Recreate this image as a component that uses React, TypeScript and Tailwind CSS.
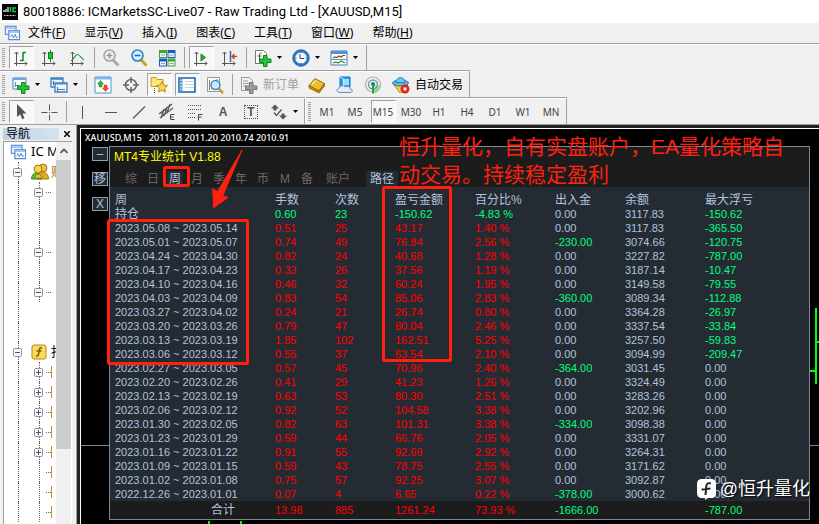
import type { ReactNode } from "react";
import clsx from "clsx";

const menus = [
    ["文件", "F"],
    ["显示", "V"],
    ["插入", "I"],
    ["图表", "C"],
    ["工具", "T"],
    ["窗口", "W"],
    ["帮助", "H"],
];

const periods = ["M1", "M5", "M15", "M30", "H1", "H4", "D1", "W1", "MN"];

const tabs = ["综", "日", "周", "月", "季", "年", "币", "M", "备"];

const columns = ["周", "手数", "次数", "盈亏金额", "百分比%", "出入金", "余额", "最大浮亏"];

const rows = [
    ["持仓", "0.60", "23", "-150.62", "-4.83 %", "0.00", "3117.83", "-150.62"],
    ["2023.05.08 ~ 2023.05.14", "0.51", "25", "43.17", "1.40 %", "0.00", "3117.83", "-365.50"],
    ["2023.05.01 ~ 2023.05.07", "0.74", "49", "76.84", "2.56 %", "-230.00", "3074.66", "-120.75"],
    ["2023.04.24 ~ 2023.04.30", "0.82", "24", "40.68", "1.28 %", "0.00", "3227.82", "-787.00"],
    ["2023.04.17 ~ 2023.04.23", "0.33", "26", "37.56", "1.19 %", "0.00", "3187.14", "-10.47"],
    ["2023.04.10 ~ 2023.04.16", "0.46", "32", "60.24", "1.95 %", "0.00", "3149.58", "-79.55"],
    ["2023.04.03 ~ 2023.04.09", "0.83", "54", "85.06", "2.83 %", "-360.00", "3089.34", "-112.88"],
    ["2023.03.27 ~ 2023.04.02", "0.24", "21", "26.74", "0.80 %", "0.00", "3364.28", "-26.97"],
    ["2023.03.20 ~ 2023.03.26", "0.79", "47", "80.04", "2.46 %", "0.00", "3337.54", "-33.84"],
    ["2023.03.13 ~ 2023.03.19", "1.85", "102", "162.51", "5.25 %", "0.00", "3257.50", "-59.83"],
    ["2023.03.06 ~ 2023.03.12", "0.55", "37", "63.54", "2.10 %", "0.00", "3094.99", "-209.47"],
    ["2023.02.27 ~ 2023.03.05", "0.57", "45", "70.96", "2.40 %", "-364.00", "3031.45", "0.00"],
    ["2023.02.20 ~ 2023.02.26", "0.41", "29", "41.23", "1.26 %", "0.00", "3324.49", "0.00"],
    ["2023.02.13 ~ 2023.02.19", "0.63", "53", "80.30", "2.51 %", "0.00", "3283.26", "0.00"],
    ["2023.02.06 ~ 2023.02.12", "0.92", "52", "104.58", "3.38 %", "0.00", "3202.96", "0.00"],
    ["2023.01.30 ~ 2023.02.05", "0.82", "63", "101.31", "3.38 %", "-334.00", "3098.38", "0.00"],
    ["2023.01.23 ~ 2023.01.29", "0.59", "44", "66.76", "2.05 %", "0.00", "3331.07", "0.00"],
    ["2023.01.16 ~ 2023.01.22", "0.91", "55", "92.69", "2.92 %", "0.00", "3264.31", "0.00"],
    ["2023.01.09 ~ 2023.01.15", "0.59", "43", "78.75", "2.55 %", "0.00", "3171.62", "0.00"],
    ["2023.01.02 ~ 2023.01.08", "0.75", "57", "92.25", "3.07 %", "0.00", "3092.87", "0.00"],
    ["2022.12.26 ~ 2023.01.01", "0.07", "4", "6.65", "0.22 %", "-378.00", "3000.62", "0.00"],
];

const total = ["合计", "13.98", "885", "1261.24", "73.93 %", "-1666.00", "", "-787.00"];

const cellColor = (row: string[], i: number) => {
    if (i === 0) return "text-[#b0c4de]";
    if (row[i].startsWith("-")) return "text-[#00ff7f]";
    if (i <= 4) return row[0] === "持仓" ? "text-[#00ff7f]" : "text-[#ff0000]";
    return "text-[#b0c4de]";
};

/* ---------- toolbar parts ---------- */

const Icon = ({ children, size = 18 }: { children: ReactNode; size?: number }) => (
    <svg width={size} height={size} viewBox="0 0 18 18" fill="none" className="shrink-0">
        {children}
    </svg>
);

const Tool = ({ label, pressed, children }: { label: string; pressed?: boolean; children: ReactNode }) => (
    <button aria-label={label} className="w-7 h-[25px] shrink-0 flex items-center justify-center">
        <span
            className={clsx(
                "w-[25px] h-[23px] flex items-center justify-center border",
                pressed ? "bg-[#f8f8f8] border-t-[#a0a0a0] border-l-[#a0a0a0] border-r-white border-b-white" : "border-transparent"
            )}
        >
            {children}
        </span>
    </button>
);

const Caret = () => (
    <button aria-label="更多" className="w-2.5 h-[25px] shrink-0 flex items-center">
        <svg width="5" height="3" viewBox="0 0 5 3"><path d="M0 0h5L2.500 3z" fill="#000" /></svg>
    </button>
);

const Sep = () => (
    <div className="w-1.5 h-[21px] shrink-0 flex justify-center">
        <div className="w-px bg-[#a0a0a0]" />
    </div>
);

const Grip = () => (
    <svg width="7" height="21" viewBox="0 0 7 21" className="shrink-0">
        <path d="M2 1.500h3M2 3.500h3M2 5.500h3M2 7.500h3M2 9.500h3M2 11.500h3M2 13.500h3M2 15.500h3M2 17.500h3M2 19.500h3" stroke="#a0a0a0" />
    </svg>
);

const Bar = ({ first, children }: { first?: boolean; children: ReactNode }) => (
    <div className={clsx("w-fit", !first && "border-t border-[#a0a0a0]")}>
        <div className={clsx("flex items-center border-r border-r-[#a0a0a0]", first ? "h-[25px]" : "border-t border-t-white h-[26px]")}>
            {children}
        </div>
    </div>
);

const Axes = () => (
    <path d="M4.500 3v14M2 14.500h13M2.500 5l2-2 2 2M13 12.500l2 2-2 2" stroke="#555" />
);

const Plus = ({ gray }: { gray?: boolean }) => (
    <path
        d="M9.500 6.500h3.500v3.500h4v3.500h-4v4h-3.500v-4h-4v-3.500h4z"
        fill={gray ? "#9a9a9a" : "#27c23a"}
        stroke={gray ? "#777" : "#078a1b"}
    />
);

const ChartWindows = () => (
    <Icon size={16}>
        <rect x="1.500" y="1.500" width="12" height="9" fill="#eaf3ff" stroke="#5b8fd9" strokeWidth="1.300" />
        <path d="M2 3.500h11" stroke="#8bb7ee" strokeWidth="1.500" />
        <rect x="5.500" y="6.500" width="12" height="10" fill="#fff" stroke="#4a82d2" strokeWidth="1.300" />
        <path d="M6 8h11" stroke="#8bb7ee" strokeWidth="1.500" />
        <path d="M7.500 13l1.500-2 1.500 3.500 2-4 1.500 4 2-2" stroke="#3f78c8" />
    </Icon>
);

const Magnifier = ({ gray }: { gray?: boolean }) => (
    <Icon>
        <path d="M11 11l5.500 5.500" stroke={gray ? "#aaa" : "#d0a019"} strokeWidth="3" />
        <circle cx="7.500" cy="6.500" r="5.500" fill={gray ? "#f0f0f0" : "#d9efff"} stroke={gray ? "#a5a5a5" : "#2c83cd"} strokeWidth="1.600" />
        <path d={gray ? "M4.500 6.500h6M7.500 3.500v6" : "M4.500 6.500h6"} stroke={gray ? "#999" : "#1c6fb8"} strokeWidth="1.600" />
    </Icon>
);

const Toolbars = () => (
    <div className="bg-[#f0f0f0] border-b border-[#a0a0a0]">
        <Bar first>
            <Grip />
            <Tool label="柱状图" pressed>
                <Icon><Axes /><path d="M11 3v9M11 3.500h3M8 11.500h3" stroke="#0a8a1a" strokeWidth="1.500" /></Icon>
            </Tool>
            <Tool label="蜡烛图">
                <Icon><Axes /><path d="M10.500 1v12" stroke="#078a1b" /><rect x="8.500" y="3.500" width="4" height="6" fill="#22c033" stroke="#078a1b" /></Icon>
            </Tool>
            <Tool label="折线图">
                <Icon><Axes /><path d="M3 12c3-1 4-6.500 6.500-6.500S13 9.500 16 11" stroke="#2a9a3a" strokeWidth="1.200" /></Icon>
            </Tool>
            <Sep />
            <Tool label="放大"><Magnifier gray /></Tool>
            <Tool label="缩小"><Magnifier /></Tool>
            <Tool label="平铺窗口">
                <Icon>
                    <path d="M1 1h8v8H1z" fill="#45a52a" /><path d="M9.500 1h8v8h-8z" fill="#2556c5" />
                    <path d="M1 9.500h8v8H1z" fill="#2556c5" /><path d="M9.500 9.500h8v8h-8z" fill="#45a52a" />
                    <path d="M2 4h6v4H2zM10.500 4h6v4h-6zM2 12.500h6v4H2zM10.500 12.500h6v4h-6z" fill="#e9f5f5" />
                    <path d="M3 6h4M11.500 6h4M3 14.500h4M11.500 14.500h4" stroke="#7ba6cf" />
                </Icon>
            </Tool>
            <Sep />
            <Tool label="自动滚动" pressed>
                <Icon><Axes /><path d="M9 5v7l4.500-3.500z" fill="#25b337" stroke="#078a1b" /></Icon>
            </Tool>
            <Tool label="图表平移">
                <Icon><Axes /><path d="M10.500 2v11" stroke="#3a62a0" strokeWidth="1.500" /><path d="M17 7.500h-5M14.500 5L12 7.500 14.500 10" stroke="#c8431c" strokeWidth="1.300" /></Icon>
            </Tool>
            <Sep />
            <Tool label="指标列表">
                <Icon>
                    <path d="M1.500 1.500h8l3 3v10h-11z" fill="#fff" stroke="#777" />
                    <path d="M7.500 4c-2-.5-2 1-2 3v4M3.500 7h4" stroke="#555" /><Plus />
                </Icon>
            </Tool>
            <Caret />
            <Tool label="时间周期">
                <Icon>
                    <circle cx="9" cy="9" r="7" fill="#f3faff" stroke="#2279cf" strokeWidth="2.500" />
                    <circle cx="9" cy="9" r="8.300" stroke="#104d98" strokeWidth=".7" />
                    <path d="M8 5v4.500h4M9 3v1M9 14v1M3.500 9h1M13.500 9h1" stroke="#444" />
                </Icon>
            </Tool>
            <Caret />
            <Tool label="模板">
                <Icon>
                    <path d="M1 2h16v14H1z" fill="#fff" stroke="#3f7fbe" /><path d="M1 2h16v3H1z" fill="#4f94d6" />
                    <path d="M1.500 10.500h15" stroke="#5c91c9" /><path d="M3 9l2-1 2 .5 2-1.500 2 1 2-1.500h2" stroke="#9e3421" strokeWidth="1.200" />
                    <path d="M3 14l3-1 2 1 3-2 4 2" stroke="#2a9236" strokeWidth="1.200" />
                </Icon>
            </Tool>
            <Caret />
            <div className="w-[3px]" />
        </Bar>

        <Bar>
            <Grip />
            <Tool label="新图表">
                <Icon><path d="M1 2h13v11H1z" fill="#fff" stroke="#3f7fbe" /><path d="M1 2h13v2H1z" fill="#6ba6dc" /><path d="M3.500 6v5M2.500 9.500h5" stroke="#5c91c9" /><Plus /></Icon>
            </Tool>
            <Caret />
            <Tool label="图表组">
                <Icon>
                    <path d="M1 2h12v9H1z" fill="#e8f3fd" stroke="#3f7fbe" strokeWidth="1.300" /><path d="M1 3h12" stroke="#3f7fbe" strokeWidth="1.500" />
                    <path d="M5 7h12v9H5z" fill="#f5faff" stroke="#3f7fbe" strokeWidth="1.300" /><path d="M5 8h12M7 13.500h8M7.500 11v4M3.500 5v4" stroke="#3f7fbe" strokeWidth="1.200" />
                </Icon>
            </Tool>
            <Caret />
            <Sep />
            <Tool label="市场报价">
                <Icon>
                    <path d="M1 1h16v16H1z" fill="#fff" stroke="#4d94d2" /><path d="M1 1h16v2.500H1z" fill="#79b8ea" />
                    <path d="M6.500 4.500l3 3.500H8v3H5V8H3.500z" fill="#27b53a" stroke="#168427" strokeWidth=".5" />
                    <path d="M11.500 15.500l-3-3.500H10V9h3v3h1.500z" fill="#ed5430" stroke="#b93211" strokeWidth=".5" />
                </Icon>
            </Tool>
            <Tool label="数据窗口">
                <Icon><circle cx="9" cy="9" r="5.500" stroke="#666" strokeWidth="1.500" /><path d="M9 1v6M9 11v6M1 9h6M11 9h6" stroke="#666" strokeWidth="1.500" /></Icon>
            </Tool>
            <Tool label="导航" pressed>
                <Icon>
                    <path d="M1 3V1.500h5l1.500 2H13v7H1z" fill="#ffe477" stroke="#c89a16" /><path d="M4.500 12v5" stroke="#555" strokeDasharray="1 1" />
                    <path d="M12 5.500l1.700 3.500 3.800.5-2.800 2.600.7 3.900-3.400-1.900L8.600 16l.7-3.900-2.800-2.600 3.800-.5z" fill="#ffd84a" stroke="#bd8817" />
                </Icon>
            </Tool>
            <Tool label="终端" pressed>
                <Icon><path d="M1 2h16v14H1z" fill="#fff" stroke="#1660ad" strokeWidth="1.500" /><path d="M1.500 2.500h3v13h-3z" fill="#5ea0dc" /><path d="M7 5.500h9M7 8.500h9M7 11.500h9" stroke="#c3d3e3" /><path d="M3 4v10" stroke="#fff" strokeDasharray="1 2" /></Icon>
            </Tool>
            <Tool label="策略测试">
                <Icon>
                    <path d="M1.500 1.500h12v14h-12z" fill="#fff" stroke="#999" /><path d="M3.500 4v10M5.500 6v7M11 3v5" stroke="#8b795b" />
                    <path d="M13 13l4 4" stroke="#cf9920" strokeWidth="2.500" /><circle cx="9.500" cy="9" r="4.500" fill="#c9e6fc" fillOpacity=".85" stroke="#3c86c8" strokeWidth="1.400" />
                </Icon>
            </Tool>
            <Sep />
            <button className="flex items-center h-[25px] pr-1 text-xs text-[#a0a0a0]">
                <span className="w-7 flex justify-center">
                    <Icon><path d="M1.500 1.500h8l3 3v10h-11z" fill="#f3f3f3" stroke="#999" /><path d="M3 5h5M3 7.500h6M3 10h4" stroke="#999" /><Plus gray /></Icon>
                </span>
                新订单
            </button>
            <Tool label="MetaEditor">
                <Icon>
                    <path d="M1 9.500L7 2.500l9.500 5-5.500 7.500z" fill="#eebd31" stroke="#9b6f0b" /><path d="M1 9.500v2.500L11 17l5.500-7V7.500L11 15z" fill="#c68c14" stroke="#8d6406" strokeWidth=".8" />
                    <path d="M4 8.500L8 4.500" stroke="#ffeaa0" strokeWidth="1.500" />
                </Icon>
            </Tool>
            <Tool label="VPS">
                <Icon>
                    <path d="M4 1h10v10H4z" fill="#27a1f0" stroke="#0c73c2" /><path d="M8 3h5v6H8z" fill="#a4dcff" /><path d="M4 1l3.500 2v7" stroke="#d0efff" />
                    <path d="M4 16.500c-4 0-3.500-4.500-.5-4.500 1-3 5-3 6-1 2.500-1.500 5 0 4.500 2 3 0 3 3.500 0 3.500z" fill="#e3edf8" stroke="#6b8cb3" />
                </Icon>
            </Tool>
            <Tool label="信号">
                <Icon>
                    <circle cx="9" cy="8.500" r="7.500" stroke="#9fb6c0" strokeWidth="1.200" /><circle cx="9" cy="8.500" r="4.500" stroke="#63a889" strokeWidth="1.400" />
                    <path d="M9 8.500v9c4 0 7-4 7-8" fill="#55bd5b" fillOpacity=".45" /><path d="M9 9v8.500" stroke="#2da237" strokeWidth="2" /><circle cx="9" cy="8" r="2" fill="#2370b9" />
                </Icon>
            </Tool>
            <button className="flex items-center h-[25px] pr-1.5 text-xs text-black">
                <span className="w-7 flex justify-center">
                    <Icon>
                        <path d="M2 9l6 8 8-8z" fill="#f3cf46" stroke="#b78b18" /><ellipse cx="8.500" cy="7" rx="8" ry="3" fill="#61b5df" stroke="#2f7ea9" />
                        <path d="M4 6.500C4 0 13 0 13 6.500z" fill="#75c4ea" stroke="#2f7ea9" />
                        <circle cx="13" cy="13" r="4.500" fill="#dc2a12" /><path d="M11.500 11.500h3v3h-3z" fill="#fff" />
                    </Icon>
                </span>
                自动交易
            </button>
        </Bar>

        <div className="flex">
            <Bar>
                <Grip />
                <Tool label="光标" pressed>
                    <Icon><path d="M5 1v13l3.200-2.800 2 5 2.300-1-2-4.700h4z" fill="#555" /></Icon>
                </Tool>
                <Tool label="十字线"><Icon><path d="M9.500 1.500v6M9.500 11.500v6M1.500 9.500h6M11.500 9.500h6M9 9.500h1" stroke="#555" /></Icon></Tool>
                <Sep />
                <Tool label="垂直线"><Icon><path d="M8.500 3v13" stroke="#555" /></Icon></Tool>
                <Tool label="水平线"><Icon><path d="M3 9.500h12" stroke="#555" /></Icon></Tool>
                <Tool label="趋势线"><Icon><path d="M3 15.500L15 3.500" stroke="#555" strokeWidth="1.200" /></Icon></Tool>
                <Tool label="等距通道">
                    <Icon>
                        <path d="M1 11L14 1M2 15L15 5" stroke="#555" strokeWidth="1.200" />
                        <path d="M3 15l3-9M6 13l3-9M9 10l3-9M3 9l3 3M7 6l3 3" stroke="#555" strokeWidth="1.200" />
                        <path d="M16.500 11.500h-4v5h4M12.500 14h3" stroke="#444" />
                    </Icon>
                </Tool>
                <Tool label="斐波纳契">
                    <Icon>
                        <path d="M2 2.500h14M2 6.500h14M2 10.500h8M2 14.500h8" stroke="#555" strokeDasharray="1 1" />
                        <path d="M16.500 11.500h-4v6M12.500 14h3" stroke="#444" />
                    </Icon>
                </Tool>
                <Tool label="文字"><span className="text-xs leading-3 font-bold text-[#555]">A</span></Tool>
                <Tool label="文本标签">
                    <span className="w-3.5 h-3.5 border border-dotted border-[#555] flex items-center justify-center text-xs leading-3 font-bold text-[#555]">T</span>
                </Tool>
                <Tool label="箭头">
                    <Icon><path d="M1 5.500L5 1.500l4 4H6.500V7.500h-3v-2zM9 12.500h2.500v-2h3v2H17l-4 4z" fill="#555" /><path d="M4 9.500l2.500 3 5-6" stroke="#555" strokeWidth="1.300" /></Icon>
                </Tool>
                <Caret />
                <div className="w-px" />
            </Bar>
            <div className="border-l border-white">
                <Bar>
                    <Grip />
                    {periods.map((p) => (
                        <Tool key={p} label={p} pressed={p === "M15"}>
                            <span className="font-['Noto_Sans'] text-[10px] leading-3 text-[#444]">{p}</span>
                        </Tool>
                    ))}
                    <div className="w-px" />
                </Bar>
            </div>
        </div>
    </div>
);

/* ---------- navigator ---------- */

const Box = ({ open }: { open?: boolean }) => (
    <svg width="9" height="9" viewBox="0 0 9 9" className="relative">
        <rect x=".5" y=".5" width="8" height="8" rx="1" fill="#f8f8f8" stroke="#919191" />
        <path d={open ? "M2 4.500h5" : "M2 4.500h5M4.500 2v5"} stroke="#35589b" />
    </svg>
);

const Guide = ({ line, wide, children }: { line?: boolean; wide?: boolean; children?: ReactNode }) => (
    <div className={clsx("relative h-5 shrink-0 flex items-center justify-center", wide ? "w-[27px]" : "w-[15px]")}>
        {line && <div className="absolute inset-y-0 left-1/2 border-l border-dotted border-[#606060]" />}
        {children}
    </div>
);

const Dots = () => <div className="w-[5px] shrink-0 border-t border-dotted border-[#606060]" />;

const Navigator = () => (
    <aside className="w-[77px] shrink-0 flex flex-col bg-[#f0f0f0] pt-0.5 pl-[3px] border-r border-[#a0a0a0]">
        <div className="flex items-center h-[13px] text-xs leading-3 text-black">
            <h2 className="w-14 pl-[3px] bg-gradient-to-r from-[#bfd3e6] to-[#d5e2f0]">导航</h2>
            <button aria-label="关闭" className="w-4 flex justify-center">
                <svg width="6" height="6" viewBox="0 0 6 6"><path d="M0 0l6 6M6 0L0 6" stroke="#000" strokeWidth="1.500" /></svg>
            </button>
        </div>
        <div className="flex flex-1 mt-px mr-1 border-t border-l border-[#a0a0a0] bg-white">
            <div className="w-[52px] overflow-hidden whitespace-nowrap">
                <div className="flex items-center h-5 pl-1.5 gap-[5px] font-['Noto_Sans'] text-[13px] text-black">
                    <ChartWindows />
                    IC Markets
                </div>
                <div className="flex items-center h-5 text-[13px] text-black">
                    <Guide wide line><Box open /></Guide>
                    <Icon>
                        <circle cx="12" cy="5" r="4" fill="#ecc13a" stroke="#a77b0e" /><path d="M6 16c0-9 11.500-9 11.500 0z" fill="#dfae20" stroke="#a77b0e" />
                        <path d="M.5 16c0-8 9.500-8 10 0z" fill="#4cc53a" stroke="#23861a" /><path d="M4 15c0-5 7-5 7 0z" fill="#ecc13a" stroke="#a77b0e" />
                        <circle cx="7" cy="6" r="4" fill="#f5d052" stroke="#a77b0e" />
                    </Icon>
                    <span className="pl-0.5 text-[#a97510]">账户</span>
                </div>
                {["open", "", "", "open", "", "open"].map((s, i) => (
                    <div key={i} className="flex items-center h-5">
                        <Guide wide line />
                        <Guide line>{s && <Box open />}</Guide>
                        {s && <Dots />}
                    </div>
                ))}
                <div className="h-5 flex"><Guide wide line /></div>
                <div className="h-5 flex"><Guide wide line /></div>
                <div className="flex items-center h-5 text-[13px] text-black">
                    <Guide wide line><Box open /></Guide>
                    <Icon>
                        <rect x="1" y="2" width="14" height="14" rx="2" fill="#fada57" stroke="#b38a1c" />
                        <path d="M11 5c-2.500-.8-2.500 1-3 4s-.8 4.500-3 4M5.500 8h5" stroke="#7a5a08" strokeWidth="1.500" />
                    </Icon>
                    <span className="pl-0.5">指标</span>
                </div>
                {[1, 2, 3, 4, 5, 6, 7, 8].map((n) => (
                    <div key={n} className="flex items-center h-5">
                        <Guide wide line />
                        <Guide line>{n <= 5 && <Box />}</Guide>
                        <Dots />
                        <div className="w-px h-3 bg-[#c9982c]" />
                    </div>
                ))}
            </div>
            <div className="w-[15px] bg-[#f0f0f0]">
                <button aria-label="向上滚动" className="w-full h-[18px] flex items-center justify-center">
                    <svg width="8" height="6" viewBox="0 0 8 6"><path d="M.5 5L4 1.500 7.500 5" fill="none" stroke="#505050" strokeWidth="1.700" /></svg>
                </button>
                <div className="h-[289px] bg-[#cdcdcd]" />
            </div>
        </div>
    </aside>
);

/* ---------- chart ---------- */

const PanelButton = ({ children }: { children: string }) => (
    <button className="w-4 h-3.5 border border-[#8ba0b8] bg-[#252b33] text-[#b0c4de] text-xs leading-3 flex items-center justify-center">
        {children}
    </button>
);

const StatsPanel = () => (
    <section className="flex-1 border border-[#778899] bg-[#252b33] text-[#b0c4de] relative">
        <div className="h-10 bg-[#1c1c1c] pt-1 flex flex-col justify-between">
            <h1 className="pl-1 text-xs leading-3 text-[#ffff00]">MT4专业统计 V1.88</h1>
            <div className="flex pl-2.5 text-xs leading-4 text-[#696969]">
                {tabs.map((t) => (
                    <button key={t} className="w-[22px] flex justify-center">
                        <span className={clsx("px-0.5", t === "周" && "bg-[#252b33] text-[#b0c4de]")}>{t}</span>
                    </button>
                ))}
                <button className="w-10">账户</button>
                <button className="w-8 ml-2 bg-[#252b33] text-[#b0c4de]">路径</button>
            </div>
        </div>

        <table className="w-full table-fixed border-collapse text-[11px] leading-[14px] text-left">
            <colgroup>
                <col className="w-[165px]" />
                <col className="w-[60px]" />
                <col className="w-[60px]" />
                <col className="w-20" />
                <col className="w-20" />
                <col className="w-[70px]" />
                <col className="w-20" />
                <col />
            </colgroup>
            <thead>
                <tr className="h-5 text-xs leading-[14px]">
                    {columns.map((c, i) => (
                        <th key={c} className={clsx("p-0 font-normal align-bottom", i === 0 && "pl-[5px]")}>
                            <div className="h-3.5">{c}</div>
                        </th>
                    ))}
                </tr>
            </thead>
            <tbody>
                {rows.map((row) => (
                    <tr key={row[0]} className="h-3.5">
                        {row.map((v, i) => (
                            <td key={i} className={clsx("p-0", i === 0 && "pl-[5px]", cellColor(row, i))}>
                                <div className={clsx("h-3.5 whitespace-nowrap", v === "持仓" && "text-xs leading-[14px]")}>{v}</div>
                            </td>
                        ))}
                    </tr>
                ))}
            </tbody>
            <tfoot>
                <tr className="h-[18px] bg-[#1c1c1c]">
                    {total.map((v, i) => (
                        <td key={i} className={clsx("p-0", i === 0 && "text-right text-xs leading-[14px] pr-10", cellColor(total, i))}>
                            {v}
                        </td>
                    ))}
                </tr>
            </tfoot>
        </table>
    </section>
);

const Chart = () => (
    <main className="flex-1 min-w-0 border-t-[3px] border-l-[3px] border-[#202020] bg-black">
        <div className="relative h-full border-t border-l border-white overflow-hidden">
            <div className="h-[17px] pl-1 pt-0.5 text-[9px] leading-[13px] font-['Noto_Sans'] font-medium text-white whitespace-pre">
                XAUUSD,M15   2011.18 2011.20 2010.74 2010.91
            </div>

            {/* price level and bars behind the panel */}
            <div className="absolute inset-x-0 top-[316px] h-px bg-[#778899]" />
            <svg width="10" height="76" viewBox="0 0 10 76" className="absolute right-0 top-[179px]">
                <path d="M7 0v76M0 63h7M7 34h3" stroke="#0f0" strokeWidth="2" />
            </svg>
            <div className="absolute left-[127px] top-[392px] w-0.5 h-1 bg-[#0f0]" />
            <div className="absolute left-[159px] top-[392px] w-0.5 h-1 bg-[#0f0]" />

            <div className="flex pl-[11px] pr-[9px] pb-1">
                <div className="w-[17px] shrink-0 pt-px flex flex-col gap-[11px]">
                    <PanelButton>–</PanelButton>
                    <PanelButton>移</PanelButton>
                    <PanelButton>X</PanelButton>
                </div>
                <StatsPanel />
            </div>

            {/* annotations */}
            <svg width="738" height="395" viewBox="81 129 738 395" fill="none" className="absolute left-0 top-0 pointer-events-none">
                <g stroke="#ff2010" strokeWidth="3">
                    <rect x="108.500" y="220.500" width="139" height="143" rx="1" />
                    <rect x="383.500" y="187.500" width="67" height="173" rx="1" />
                    <rect x="164.500" y="167.500" width="24" height="18" rx="1" />
                </g>
                <path d="M242 150L217.700 191.500 212.700 189 213.700 207.700 228 197.500 222.700 196z" fill="#ff2010" stroke="#ff2010" strokeLinejoin="round" />
            </svg>
            <p className="absolute left-[318px] top-1 text-[21px] leading-7 text-[#ff2010] whitespace-nowrap">
                恒升量化，自有实盘账户，EA量化策略自
                <br />
                动交易。持续稳定盈利
            </p>
            <div className="absolute right-[9px] bottom-[23px] flex items-center gap-1 text-lg leading-6 text-white whitespace-nowrap [text-shadow:1px_1px_2px_#000]">
                <svg width="19" height="21" viewBox="0 0 19 21">
                    <path d="M5 0h9q5 0 5 5v9q0 5-5 5h-3l-3 2v-2H5q-5 0-5-5V5q0-5 5-5z" fill="#fff" />
                    <path d="M14 4.500c-3-1-4.500 0-4.700 3L8.500 16M4.500 10.500c3 .5 5-1 9-1" fill="none" stroke="#222" strokeWidth="2" />
                </svg>
                @恒升量化
            </div>
        </div>
    </main>
);

export default function App() {
    return (
        <div className="min-h-screen flex flex-col overflow-hidden bg-[#f0f0f0] font-['Liberation_Sans','Noto_Sans_CJK_SC',sans-serif]">
            <header className="flex items-center h-[23px] bg-white pl-0.5 gap-[5px] font-['Roboto'] text-[13px] text-black whitespace-nowrap">
                <svg width="16" height="16" viewBox="0 0 16 16">
                    <path d="M0 0h16v16H0z" fill="#050505" />
                    <path d="M2 8V6M4 8V5M6 8V3" stroke="#fff" strokeWidth="1.200" />
                    <path d="M8.500 3v5M14 4h-3v3.500h3" stroke="#1fc43a" strokeWidth="1.500" fill="none" />
                    <path d="M2 11.500h12" stroke="#ccc" strokeDasharray="1 .5" />
                </svg>
                80018886: ICMarketsSC-Live07 - Raw Trading Ltd - [XAUUSD,M15]
            </header>
            <nav className="flex items-center h-[21px] pl-1 border-b border-[#a0a0a0] font-['Noto_Sans','Noto_Sans_CJK_SC',sans-serif] text-xs leading-4 text-black whitespace-nowrap">
                <ChartWindows />
                <div className="flex gap-[19px] pl-2">
                    {menus.map(([name, key]) => (
                        <button key={key}>
                            {name}(<u>{key}</u>)
                        </button>
                    ))}
                </div>
            </nav>
            <div className="h-px bg-white" />
            <Toolbars />
            <div className="flex-1 flex">
                <Navigator />
                <Chart />
            </div>
        </div>
    );
}
